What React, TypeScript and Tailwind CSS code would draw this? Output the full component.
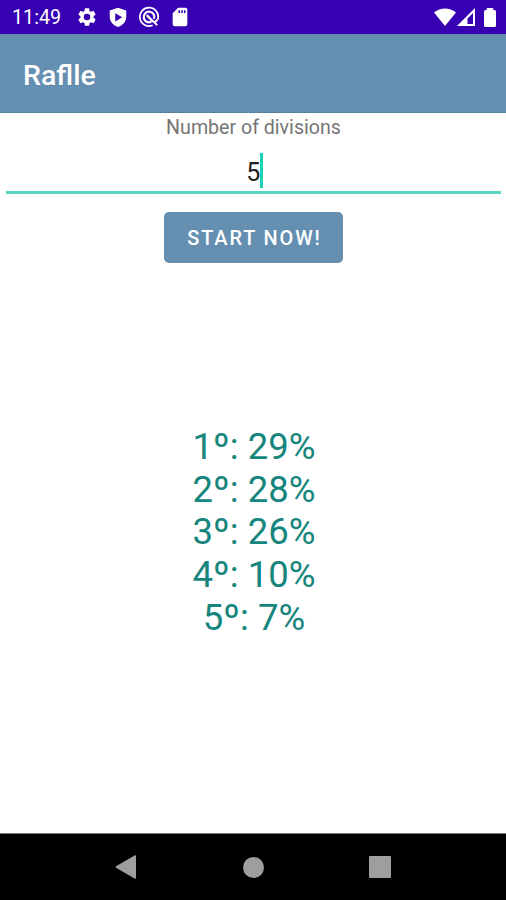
import React from "react";

const results = ["1º: 29%", "2º: 28%", "3º: 26%", "4º: 10%", "5º: 7%"];

function StatusBar() {
  return (
    <header className="flex h-[34px] shrink-0 items-center bg-[#3700b3] pl-3 pr-[10px] text-white">
      <span className="w-[64px] pt-[2px] text-[19.7px] leading-[34px]">11:49</span>
      <svg className="h-[22px] w-[22px] shrink-0" viewBox="0 0 24 24" fill="currentColor">
        <path d="M19.14 12.94c.04-.3.06-.61.06-.94s-.02-.64-.07-.94l2.03-1.58a.49.49 0 0 0 .12-.61l-1.92-3.32a.49.49 0 0 0-.59-.22l-2.39.96a7 7 0 0 0-1.62-.94l-.36-2.54A.48.48 0 0 0 13.92 2.4h-3.84a.48.48 0 0 0-.47.41l-.36 2.54a7.3 7.3 0 0 0-1.62.94l-2.39-.96a.48.48 0 0 0-.59.22L2.74 8.87a.48.48 0 0 0 .12.61l2.03 1.58a6 6 0 0 0 0 1.88l-2.03 1.58a.49.49 0 0 0-.12.61l1.92 3.32c.12.22.37.29.59.22l2.39-.96c.5.38 1.03.7 1.62.94l.36 2.54c.05.24.24.41.48.41h3.84c.24 0 .44-.17.47-.41l.36-2.54a7 7 0 0 0 1.62-.94l2.39.96c.22.08.47 0 .59-.22l1.92-3.32a.48.48 0 0 0-.12-.61zM12 15.6a3.6 3.6 0 1 1 0-7.2 3.6 3.6 0 0 1 0 7.2z" />
      </svg>
      <svg className="ml-[9px] h-[22px] w-[22px] shrink-0" viewBox="0 0 24 24">
        <path d="M12 2 3 5v7c0 5.2 3.8 9 9 11 5.200-2 9-5.8 9-11V5z" fill="currentColor" />
        <path d="m9 8 7.5 4.4L9 16.8z" fill="#3700b3" />
      </svg>
      <svg className="ml-[9px] h-[22px] w-[22px] shrink-0" viewBox="0 0 24 24" fill="none" stroke="currentColor">
        <path d="M16 21a10 10 0 1 1 5.500-6" strokeWidth="1.900" />
        <path d="m16.500 16.500 4.500 4.500M18 18l3.300-3" strokeWidth="2" />
        <path d="M14.500 17.300a5.800 5.800 0 1 1 3-3.300" strokeWidth="2.400" />
        <path d="m9.500 10 7 7" strokeWidth="2.500" />
      </svg>
      <svg className="ml-[9px] h-[22px] w-[22px] shrink-0" viewBox="0 0 24 24" fill="currentColor">
        <path d="M18 2h-8L4 8v12c0 1.1.9 2 2 2h12c1.1 0 2-.9 2-2V4c0-1.1-.9-2-2-2zm-6 5.500h-1.700V4.500H12zm3 0h-1.700V4.500H15zm3 0h-1.700V4.500H18z" />
      </svg>
      <div className="ml-auto flex items-center">
        <svg className="h-[18px] w-[22px]" viewBox="0 0 22 18" fill="currentColor">
          <path d="M0 4.500C6.500-.8 15.500-.8 22 4.500L11 18z" />
        </svg>
        <svg className="ml-[1px] h-[18px] w-[18px]" viewBox="0 0 18 18">
          <path fillRule="evenodd" fill="currentColor" d="M18 0v18H0zM16 5 10.500 10.500V16H16z" />
        </svg>
        <svg className="ml-[9px] h-[19px] w-[12px]" viewBox="0 0 13 18" preserveAspectRatio="none" fill="currentColor">
          <path d="M3 0h7v2h1.500Q13 2 13 3.500v13Q13 18 11.500 18h-10Q0 18 0 16.500v-13Q0 2 1.500 2H3z" />
        </svg>
      </div>
    </header>
  );
}

function NavigationBar() {
  return (
    <nav className="flex h-[67px] shrink-0 items-center border-t border-[#777] bg-black pl-[115px] text-[#9e9e9e]">
      <svg className="h-6 w-[21px]" viewBox="0 0 21 24" fill="currentColor">
        <path d="M1 11.300 19.500.6q1.500-.8 1.500.8v21.200q0 1.600-1.500.8L1 12.700q-1-.7 0-1.400z" />
      </svg>
      <span className="ml-[107px] h-[21px] w-[21px] rounded-full bg-current" />
      <span className="ml-[105px] h-[22px] w-[22px] rounded-[1px] bg-current" />
    </nav>
  );
}

export default function App() {
  return (
    <div className="flex h-[900px] w-[506px] flex-col overflow-hidden bg-white font-[Roboto,sans-serif]">
      <StatusBar />
      <div className="flex h-[79px] shrink-0 items-center border-b border-[#55809f] bg-[#658fb1] pl-[23px] pt-[6px]">
        <h1 className="text-[28.5px] font-medium leading-8 text-white">Raflle</h1>
      </div>
      <main className="flex flex-1 flex-col items-center">
        <label className="mt-[3px] pl-px text-[19.6px] leading-[23px] text-[#757575]">Number of divisions</label>
        <div className="mt-3 flex h-[43px] w-[495px] justify-center border-b-[3px] border-[#5cd5c5] pl-[3px]">
          <span className="pt-[7px] text-[25px] leading-[30px] text-[#212121]">5</span>
          <span className="mt-[2px] h-[35px] w-[2.5px] bg-[#1bd1b7]" />
        </div>
        <button className="mt-[18px] h-[51px] w-[179px] rounded-[5px] bg-[#658fb1] pl-[3px] pt-[3px] text-[19.9px] font-medium tracking-[1.9px] text-white">
          START NOW!
        </button>
        <div className="mt-[163px] pl-[2px] text-center text-[36.5px] leading-[42.7px] text-[#16857d]">
          {results.map((result) => <p key={result}>{result}</p>)}
        </div>
      </main>
      <NavigationBar />
    </div>
  );
}
